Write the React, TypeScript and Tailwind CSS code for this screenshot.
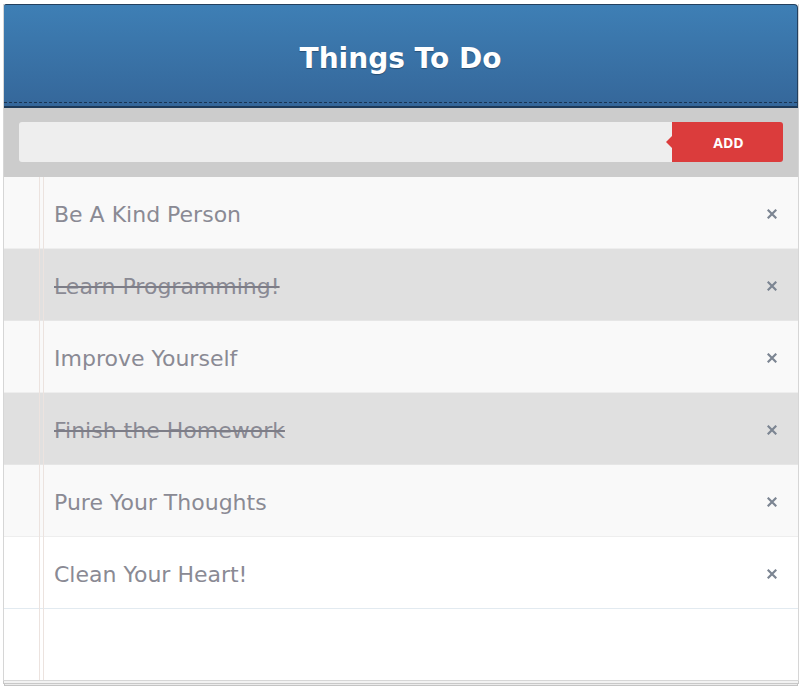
import { useState, type FC } from "react";

type Todo = {
    id: number;
    text: string;
    done: boolean;
};

const initialTodos: Todo[] = [
    { id: 1, text: "Be A Kind Person", done: false },
    { id: 2, text: "Learn Programming!", done: true },
    { id: 3, text: "Improve Yourself", done: false },
    { id: 4, text: "Finish the Homework", done: true },
    { id: 5, text: "Pure Your Thoughts", done: false },
    { id: 6, text: "Clean Your Heart!", done: false },
];

const comic = { fontFamily: '"Comic Sans MS", "DejaVu Sans", sans-serif' };

const App: FC = () => {
    const [todos, setTodos] = useState<Todo[]>(initialTodos);
    const [text, setText] = useState("");

    const handleAdd = () => {
        if (!text.trim()) return;
        setTodos([...todos, { id: Date.now(), text, done: false }]);
        setText("");
    };

    const toggle = (id: number) => setTodos(todos.map(t => (t.id === id ? { ...t, done: !t.done } : t)));

    return (
        <div className="min-h-[688px] bg-white pt-[4px] pl-[3px]">
            <div className="w-[796px] border border-[#d6d6d6] border-t-0 bg-white shadow-[0_3px_0_-1px_#f2f2f2,0_3px_0_0_#c8c8c8,0_6px_0_-2px_#ececec,0_6px_0_-1px_#c4c4c4]">
                {/* header */}
                <div className="h-[104px] flex flex-col rounded-tr-[4px] rounded-tl-[2px] border-t border-r border-[#23405e] bg-gradient-to-b from-[#3e7fb5] to-[#35679a] border-b-2 border-b-[#1e3a58]">
                    <div className="flex-1 flex items-center justify-center pt-[10px]">
                        <h1
                            className="text-[28px] font-bold text-white [text-shadow:0_1px_1px_rgba(0,0,0,0.3)]"
                            style={comic}
                        >
                            Things To Do
                        </h1>
                    </div>
                    <div className="mb-[3px] border-b border-dashed border-[#1b3552]" />
                </div>

                {/* input bar */}
                <div className="bg-[#cccccc] px-[15px] pt-[14px] pb-[15px] flex">
                    <input
                        value={text}
                        onChange={(e) => setText(e.target.value)}
                        className="flex-1 h-[40px] bg-[#eeeeee] rounded-l-[3px] px-3 outline-none text-[#666]"
                    />
                    <button
                        onClick={handleAdd}
                        className="relative w-[111px] h-[40px] bg-[#db3c3c] rounded-r-[3px] text-white text-[14px] font-bold pl-[2px]"
                        style={{ fontFamily: '"Open Sans", sans-serif' }}
                    >
                        <span className="absolute left-[-6px] top-[14px] w-0 h-0 border-y-[6px] border-y-transparent border-r-[6px] border-r-[#db3c3c]" />
                        ADD
                    </button>
                </div>

                {/* list */}
                <div className="relative min-h-[503px]">
                    <div className="absolute top-0 bottom-0 left-[35px] w-px bg-[#ece3df]" />
                    <div className="absolute top-0 bottom-0 left-[39px] w-px bg-[#ece3df]" />
                    {todos.map((todo, i) => (
                        <div
                            key={todo.id}
                            className={`h-[72px] flex items-center pl-[50px] pr-[21px] pt-[3px] border-b ${
                                todo.done
                                    ? "bg-[#e0e0e0] border-[#e6e6e6]"
                                    : i % 2 === 0
                                    ? "bg-[#f9f9f9] border-[#eeeeee]"
                                    : "bg-white border-[#e2eaf0]"
                            }`}
                        >
                            <span
                                onClick={() => toggle(todo.id)}
                                className={`flex-1 text-[22px] text-[#8a8a94] cursor-pointer ${
                                    todo.done ? "line-through decoration-[#7d7d87]" : ""
                                }`}
                                style={comic}
                            >
                                {todo.text}
                            </span>
                            <button
                                onClick={() => setTodos(todos.filter(t => t.id !== todo.id))}
                                className="text-[#7c8592] cursor-pointer"
                            >
                                <svg width="10" height="10" viewBox="0 0 10 10">
                                    <path d="M1.5 1.5 L8.5 8.5 M8.5 1.5 L1.5 8.5" stroke="currentColor" strokeWidth="2.2" strokeLinecap="square" />
                                </svg>
                            </button>
                        </div>
                    ))}
                </div>
            </div>
        </div>
    );
};

export default App;
